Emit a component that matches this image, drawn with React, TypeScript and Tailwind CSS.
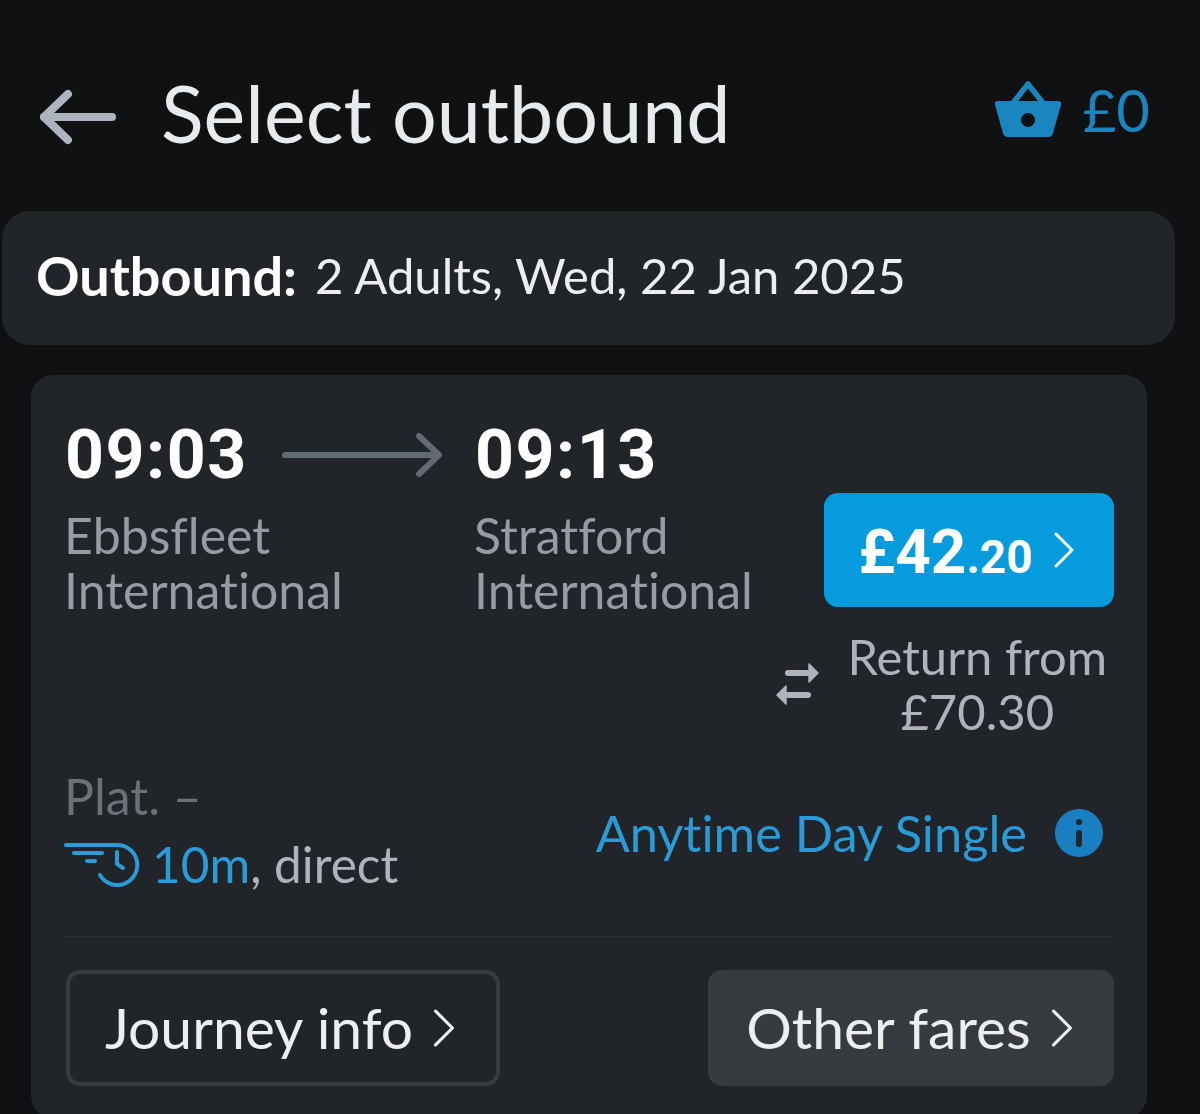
const sans = "font-['Lato','Noto_Sans',sans-serif]";

function Basket() {
    return (
        <svg width="68" height="60" viewBox="0 0 68 60" fill="none">
            <path d="M19 24 L34 5 L49 24" stroke="#1a86c0" strokeWidth="5.5" strokeLinejoin="round" />
            <path
                fillRule="evenodd"
                clipRule="evenodd"
                d="M4 22 H64 Q68 22 67 26 L59 54 Q58 58 54 58 H14 Q10 58 9 54 L1 26 Q0 22 4 22 Z M34 34 a7 7 0 1 0 0.01 0 Z"
                fill="#1a86c0"
            />
        </svg>
    );
}

function SwapIcon() {
    return (
        <svg width="44" height="44" viewBox="0 0 44 44" fill="none" stroke="#aeb4bc" strokeLinecap="round">
            <path d="M12 11 H31" strokeWidth="6" />
            <path d="M33 2 L42 11 L33 20 Z" fill="#aeb4bc" strokeWidth="1.5" strokeLinejoin="round" />
            <path d="M32 33 H12" strokeWidth="6" />
            <path d="M10 24 L1 33 L10 42 Z" fill="#aeb4bc" strokeWidth="1.5" strokeLinejoin="round" />
        </svg>
    );
}

function SpeedClock() {
    return (
        <svg width="76" height="46" viewBox="0 0 76 46" fill="none" stroke="#2a9bd6" strokeWidth="4" strokeLinecap="round" strokeLinejoin="round">
            <path d="M2 4 H53 A20 20 0 1 1 36 34" />
            <path d="M10 12 H38" />
            <path d="M23 20 H31" />
            <path d="M53 11 V23 L59 27" />
        </svg>
    );
}

// thin chevron, the lucide one is too short for these buttons
function Chevron({ w, h }: { w: number; h: number }) {
    return (
        <svg width={w} height={h} viewBox="0 0 20 36" fill="none" stroke="currentColor" strokeWidth="3" strokeLinecap="round" strokeLinejoin="round">
            <path d="M2 2 L18 18 L2 34" />
        </svg>
    );
}

export default function App() {
    return (
        <div className={`h-[1114px] w-[1200px] overflow-hidden bg-[#101112] [font-variant-ligatures:none] ${sans}`}>
            {/* Header */}
            <div className="flex h-[211px] items-center pl-[38px] pr-[50px] pt-[22px]">
                <svg width="80" height="60" viewBox="0 0 80 60" fill="none" stroke="#adb4bd" strokeWidth="8" strokeLinecap="round" strokeLinejoin="round">
                    <path d="M74 30 H6" />
                    <path d="M30 7 L6 30 L30 53" />
                </svg>
                <h1 className="mb-[8px] ml-[43px] flex-1 text-[79px] font-normal leading-none text-[#e8ebee]">Select outbound</h1>
                <div className="mb-[16px]">
                    <Basket />
                </div>
                <span className="mb-[14px] ml-[21px] text-[58px] leading-none text-[#1a86c0]">£0</span>
            </div>

            {/* Summary */}
            <div className="ml-[2px] flex h-[134px] w-[1173px] items-center gap-[18px] rounded-[28px] bg-[#212429] pb-[5px] pl-[34px]">
                <span className="text-[54px] font-bold text-white">Outbound:</span>
                <span className="text-[49px] text-[#eceef0]">2 Adults, Wed, 22 Jan 2025</span>
            </div>

            {/* Journey card */}
            <div className="ml-[31px] mt-[30px] w-[1116px] rounded-[22px] bg-[#212429] pb-[32px] pl-[35px] pr-[33px] pt-[42px]">
                <div className="flex">
                    <div className="w-[410px]">
                        <div className="flex items-center">
                            <span className="-ml-[1px] font-['Roboto',sans-serif] text-[68px] font-bold leading-[76px] tracking-[1.5px] text-white">09:03</span>
                            <svg className="ml-[34px]" width="160" height="50" viewBox="0 0 160 50" fill="none" stroke="#626a72" strokeWidth="6" strokeLinecap="round" strokeLinejoin="round">
                                <path d="M3 25 H155" />
                                <path d="M137 6 L157 25 L137 44" />
                            </svg>
                        </div>
                        <div className="-ml-[2px] mt-[15px] text-[50px] leading-[55px] text-[#969ca3]">
                            Ebbsfleet
                            <br />
                            International
                        </div>
                    </div>
                    <div className="w-[348px]">
                        <div className="-ml-[1px] font-['Roboto',sans-serif] text-[68px] font-bold leading-[76px] tracking-[1.5px] text-white">09:13</div>
                        <div className="-ml-[2px] mt-[15px] text-[50px] leading-[55px] text-[#969ca3]">
                            Stratford
                            <br />
                            International
                        </div>
                    </div>
                    <div className="flex-1 pt-[76px]">
                        <div className="flex h-[114px] items-center justify-center rounded-[14px] bg-[#069bdc] pr-[6px] text-white">
                            <span className="mt-[3px] font-['Roboto',sans-serif] text-[62px] font-bold leading-none">£42</span>
                            <span className="mt-[13px] font-['Roboto',sans-serif] text-[46px] font-bold leading-none">.20</span>
                            <span className="ml-[21px]">
                                <Chevron w={20} h={36} />
                            </span>
                        </div>
                    </div>
                </div>

                <div className="mt-[11px] flex items-center justify-end pr-[7px]">
                    <SwapIcon />
                    <div className="ml-[27px] text-center text-[49px] leading-[55px] text-[#aeb4bc]">
                        Return from
                        <br />
                        £70.30
                    </div>
                </div>

                <div className="mt-[23px] flex items-end justify-between pb-[38px]">
                    <div>
                        <div className="-ml-[2px] text-[50px] leading-[68px] text-[#6b7177]">Plat. –</div>
                        <div className="-ml-[2px] flex items-center gap-[12px] text-[49.5px] leading-[68px] text-[#aeb4bc]">
                            <SpeedClock />
                            <span>
                                <span className="text-[#2a9bd6]">10m</span>, direct
                            </span>
                        </div>
                    </div>
                    <div className="mb-[31px] flex items-center">
                        <span className="text-[50.5px] leading-[68px] text-[#2a9bd6]">Anytime Day Single</span>
                        <span className="ml-[28px] mr-[11px] flex h-[48px] w-[48px] items-center justify-center rounded-full bg-[#1a7fc0]">
                            <span className="flex h-[28px] w-[6px] flex-col items-center justify-between">
                                <span className="h-[6px] w-[6px] rounded-full bg-[#212429]" />
                                <span className="h-[17px] w-[6px] rounded-full bg-[#212429]" />
                            </span>
                        </span>
                    </div>
                </div>

                <div className="h-px bg-[#2c3036]" />

                <div className="mt-[33px] flex justify-between">
                    <div className="flex h-[116px] w-[434px] items-center justify-center gap-[20px] rounded-[14px] border-[4px] border-[#363b40] pr-[6px] text-[57px] text-[#eceef0]">
                        Journey info
                        <Chevron w={22} h={38} />
                    </div>
                    <div className="flex h-[116px] w-[406px] items-center justify-center gap-[20px] rounded-[14px] bg-[#363b3f] pr-[3px] text-[57px] text-[#eceef0]">
                        Other fares
                        <Chevron w={22} h={38} />
                    </div>
                </div>
            </div>
        </div>
    );
}
